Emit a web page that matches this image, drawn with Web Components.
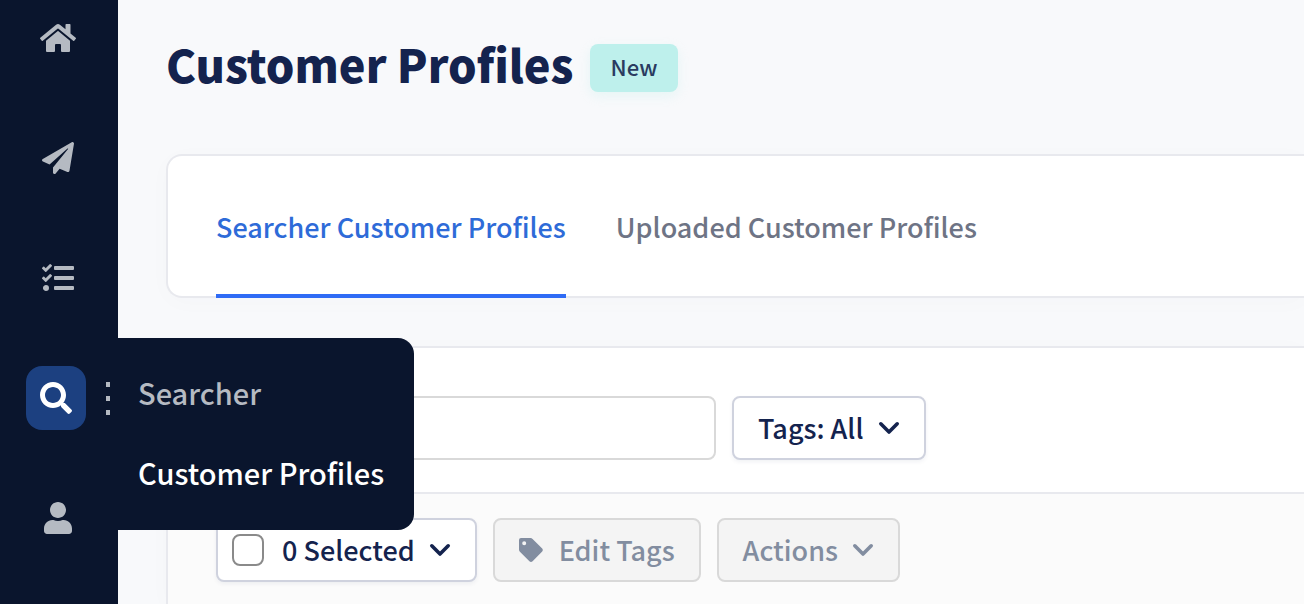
<!DOCTYPE html>
<html lang="en">
<head>
<meta charset="utf-8">
<meta name="viewport" content="width=device-width, initial-scale=1">
<title>Customer Profiles</title>
<style>
  body {
    margin: 0;
    min-height: 100vh;
    display: flex;
    background: #f8f9fb;
    color: #14234e;
    font-family: "Noto Sans CJK SC", "Noto Sans", sans-serif;
    font-size: 27px;
    line-height: 40px;
    font-weight: 500;
    overflow: hidden;
  }

  main {
    flex: 1;
    min-width: 0;
    display: flex;
    flex-direction: column;
    gap: 48px;
    padding: 30px 0 0 48px;
  }
</style>
</head>
<body>
  <side-bar>
    <nav-item icon="home" label="Home"></nav-item>
    <nav-item icon="plane" label="Campaigns"></nav-item>
    <nav-item icon="tasks" label="Tasks"></nav-item>
    <nav-item icon="search" label="Search" active>
      <fly-out>
        <fly-link>Searcher</fly-link>
        <fly-link current>Customer Profiles</fly-link>
      </fly-out>
    </nav-item>
    <nav-item icon="user" label="Account"></nav-item>
  </side-bar>

  <main>
    <page-header>Customer Profiles<status-badge slot="badge">New</status-badge></page-header>
    <tab-card>
      <tab-item active>Searcher Customer Profiles</tab-item>
      <tab-item>Uploaded Customer Profiles</tab-item>
    </tab-card>
    <profile-panel>
      <search-field slot="filters" label="Search profiles"></search-field>
      <filter-select slot="filters" label="Tags">Tags: All</filter-select>
      <select-menu slot="actions">0 Selected</select-menu>
      <tool-button slot="actions" icon="tag" disabled>Edit Tags</tool-button>
      <tool-button slot="actions" caret disabled>Actions</tool-button>
    </profile-panel>
  </main>

<script>
const ICONS = {
  home: `<svg width="36" height="32" viewBox="0 0 576 512" fill="currentColor"><path d="M280.4 148.3L96 300.1V464a16 16 0 0 0 16 16l112.100-.3a16 16 0 0 0 15.900-16V368a16 16 0 0 1 16-16h64a16 16 0 0 1 16 16v95.600a16 16 0 0 0 16 16.100L464 480a16 16 0 0 0 16-16V300L295.700 148.300a12.200 12.200 0 0 0-15.300 0zM571.600 251.500L488 182.600V44a12 12 0 0 0-12-12h-56a12 12 0 0 0-12 12v72.600L318.500 43a48 48 0 0 0-61 0L4.300 251.500a12 12 0 0 0-1.600 16.900l25.500 31a12 12 0 0 0 16.900 1.600l235.200-193.700a12.200 12.200 0 0 1 15.300 0L530.900 301a12 12 0 0 0 16.900-1.600l25.500-31a12 12 0 0 0-1.700-16.900z"/></svg>`,
  plane: `<svg width="32" height="32" viewBox="0 0 512 512" fill="currentColor"><path d="M476 3.200L12.500 270.600c-18.100 10.400-15.800 35.600 2.200 43.200L121 358.400l287.300-253.200c5.500-4.900 13.300 2.600 8.600 8.300L176 407v80.500c0 23.600 28.500 32.900 42.500 15.800L282 426l124.600 52.200c14.200 6 30.400-2.900 33-18.200l72-432C515 7.800 493.300-6.800 476 3.200z"/></svg>`,
  tasks: `<svg width="32" height="32" viewBox="0 0 512 512" fill="currentColor"><path d="M139.610 35.500a12 12 0 0 0-17 0L58.930 98.810l-22.700-22.120a12 12 0 0 0-17 0L3.530 92.410a12 12 0 0 0 0 17l47.590 47.400a12.780 12.780 0 0 0 17.610 0l15.590-15.620L156.520 69a12.090 12.090 0 0 0 .09-17zm0 159.190a12 12 0 0 0-17 0l-63.680 63.720-22.700-22.100a12 12 0 0 0-17 0L3.530 252a12 12 0 0 0 0 17L51 316.500a12.770 12.770 0 0 0 17.600 0l15.700-15.690 72.200-72.220a12 12 0 0 0 .09-16.900zM64 368c-26.490 0-48.590 21.500-48.590 48S37.530 464 64 464a48 48 0 0 0 0-96zm432 16H208a16 16 0 0 0-16 16v32a16 16 0 0 0 16 16h288a16 16 0 0 0 16-16v-32a16 16 0 0 0-16-16zm0-320H208a16 16 0 0 0-16 16v32a16 16 0 0 0 16 16h288a16 16 0 0 0 16-16V80a16 16 0 0 0-16-16zm0 160H208a16 16 0 0 0-16 16v32a16 16 0 0 0 16 16h288a16 16 0 0 0 16-16v-32a16 16 0 0 0-16-16z"/></svg>`,
  search: `<svg width="32" height="32" viewBox="0 0 512 512" fill="currentColor"><path d="M505 442.700L405.300 343c-4.500-4.500-10.600-7-17-7H372c27.600-35.300 44-79.700 44-128C416 93.100 322.900 0 208 0S0 93.100 0 208s93.100 208 208 208c48.300 0 92.700-16.400 128-44v16.300c0 6.400 2.500 12.500 7 17l99.700 99.700c9.400 9.400 24.600 9.400 33.900 0l28.300-28.300c9.400-9.400 9.400-24.600.1-34zM208 336c-70.700 0-128-57.200-128-128 0-70.700 57.200-128 128-128 70.700 0 128 57.200 128 128 0 70.700-57.200 128-128 128z"/></svg>`,
  user: `<svg width="28" height="32" viewBox="0 0 448 512" fill="currentColor"><path d="M224 256c70.700 0 128-57.300 128-128S294.700 0 224 0 96 57.300 96 128s57.300 128 128 128zm89.600 32h-16.700c-22.200 10.200-46.900 16-72.900 16s-50.600-5.800-72.900-16h-16.700C60.200 288 0 348.200 0 422.400V464c0 26.500 21.500 48 48 48h352c26.500 0 48-21.500 48-48v-41.600c0-74.200-60.200-134.400-134.400-134.400z"/></svg>`,
  tag: `<svg width="24" height="24" viewBox="0 0 24 24" fill="currentColor"><path fill-rule="evenodd" d="M2 0H11.500Q12.700 0 13.600.900L23.200 10.400Q24.400 12 23.200 13.600L13.600 23.200Q12 24.600 10.400 23.200L.9 13.800Q0 12.900 0 11.600V2Q0 0 2 0zM5.200 3.200a2 2 0 1 0 0 4 2 2 0 0 0 0-4z"/></svg>`,
  caret: `<svg width="22" height="14" viewBox="0 0 22 14" fill="none" stroke="currentColor" stroke-width="3.600" stroke-linecap="round" stroke-linejoin="round"><path d="M2.800 2.800l8.200 8.200 8.200-8.200"/></svg>`
};

class SideBar extends HTMLElement {
  constructor() {
    super();
    this.attachShadow({ mode: "open" });
  }

  connectedCallback() {
    this.shadowRoot.innerHTML = `
      <style>
        :host {
          display: block;
          flex: none;
          width: 118px;
          box-sizing: border-box;
          background: #0a152d;
          color: #b5bac2;
          z-index: 2;
        }

        nav {
          display: flex;
          flex-direction: column;
          gap: 56px;
          padding: 6px 0 6px 26px;
        }
      </style>
      <nav aria-label="Main"><slot></slot></nav>
    `;
  }
}

class NavItem extends HTMLElement {
  constructor() {
    super();
    this.attachShadow({ mode: "open" });
  }

  connectedCallback() {
    const active = this.hasAttribute("active");

    this.shadowRoot.innerHTML = `
      <style>
        :host {
          display: flex;
          align-items: center;
          gap: 20px;
          height: 64px;
          position: relative;
        }

        a {
          display: grid;
          place-items: center;
          width: 64px;
          height: 64px;
          border-radius: 16px;
          color: inherit;
        }

        :host([active]) a {
          width: 60px;
          background: #1c4080;
          color: #fff;
        }

        svg { display: block; }

        .dots {
          display: grid;
          gap: 9px;
        }

        .dots i {
          width: 4px;
          height: 5px;
          background: currentColor;
        }
      </style>
      <a href="#" aria-label="${this.getAttribute("label")}">${ICONS[this.getAttribute("icon")]}</a>
      ${active ? `<span class="dots"><i></i><i></i><i></i></span>` : ""}
      <slot></slot>
    `;
  }
}

class FlyOut extends HTMLElement {
  constructor() {
    super();
    this.attachShadow({ mode: "open" });
  }

  connectedCallback() {
    this.shadowRoot.innerHTML = `
      <style>
        /* opens beside the rail, over the page */
        :host {
          position: absolute;
          left: 100%;
          top: -28px;
          padding: 14px 30px 18px 20px;
          border-radius: 0 16px 16px 0;
          background: #0a152d;
          font-size: 29px;
          white-space: nowrap;
        }
      </style>
      <slot></slot>
    `;
  }
}

class FlyLink extends HTMLElement {
  constructor() {
    super();
    this.attachShadow({ mode: "open" });
  }

  connectedCallback() {
    this.shadowRoot.innerHTML = `
      <style>
        :host { display: block; }

        a {
          display: block;
          padding: 20px 0;
          color: #b5bac2;
          text-decoration: none;
        }

        :host([current]) a { color: #fff; }
      </style>
      <a href="#"><slot></slot></a>
    `;
  }
}

class PageHeader extends HTMLElement {
  constructor() {
    super();
    this.attachShadow({ mode: "open" });
  }

  connectedCallback() {
    this.shadowRoot.innerHTML = `
      <style>
        :host {
          display: flex;
          align-items: center;
          gap: 16px;
          height: 76px;
        }

        h1 {
          margin: 0;
          padding-bottom: 8px;
          font-size: 45px;
          line-height: 68px;
          font-weight: 900;
        }
      </style>
      <h1><slot></slot></h1>
      <slot name="badge"></slot>
    `;
  }
}

class StatusBadge extends HTMLElement {
  constructor() {
    super();
    this.attachShadow({ mode: "open" });
  }

  connectedCallback() {
    this.shadowRoot.innerHTML = `
      <style>
        :host {
          display: block;
          padding: 0 21px 4px;
          border-radius: 8px;
          background: #bef0ec;
          color: #2a3b60;
          font-size: 22px;
          line-height: 44px;
          box-shadow: 0 4px 12px rgba(190, 240, 236, 0.3);
        }
      </style>
      <slot></slot>
    `;
  }
}

class TabCard extends HTMLElement {
  constructor() {
    super();
    this.attachShadow({ mode: "open" });
  }

  connectedCallback() {
    this.shadowRoot.innerHTML = `
      <style>
        :host {
          display: block;
          border: 2px solid #e8e9ee;
          border-right: 0;
          border-radius: 16px 0 0 16px;
          background: #fff;
          box-shadow: 0 4px 24px rgba(20, 35, 78, 0.02);
        }

        div {
          display: flex;
          gap: 50px;
          padding: 0 48px;
          margin-bottom: -2px;
        }
      </style>
      <div role="tablist"><slot></slot></div>
    `;
  }
}

class TabItem extends HTMLElement {
  constructor() {
    super();
    this.attachShadow({ mode: "open" });
  }

  connectedCallback() {
    this.shadowRoot.innerHTML = `
      <style>
        :host { display: block; }

        button {
          display: block;
          padding: 51px 0 47px;
          border: 0;
          border-bottom: 4px solid transparent;
          background: none;
          color: #6e7485;
          font: inherit;
          white-space: nowrap;
          cursor: pointer;
        }

        :host([active]) button {
          color: #2e6bd8;
          border-color: #2f6bf5;
        }
      </style>
      <button role="tab" aria-selected="${this.hasAttribute("active")}"><slot></slot></button>
    `;
  }
}

class ProfilePanel extends HTMLElement {
  constructor() {
    super();
    this.attachShadow({ mode: "open" });
  }

  connectedCallback() {
    this.shadowRoot.innerHTML = `
      <style>
        :host {
          display: flex;
          flex-direction: column;
          flex: 1;
          border: 2px solid #e8e9ee;
          border-width: 2px 0 0 2px;
          border-radius: 16px 0 0 0;
          background: #fff;
          box-shadow: 0 4px 24px rgba(20, 35, 78, 0.02);
        }

        .row {
          display: flex;
          gap: 16px;
        }

        .filters { padding: 48px 48px 32px; }

        .actions {
          flex: 1;
          align-items: flex-start;
          padding: 24px 48px 22px;
          border-top: 2px solid #e8e9ee;
          background: #fbfbfb;
        }
      </style>
      <div class="row filters"><slot name="filters"></slot></div>
      <div class="row actions"><slot name="actions"></slot></div>
    `;
  }
}

class SearchField extends HTMLElement {
  constructor() {
    super();
    this.attachShadow({ mode: "open" });
  }

  connectedCallback() {
    this.shadowRoot.innerHTML = `
      <style>
        :host {
          display: block;
          flex: 0 1 500px;
        }

        input {
          display: block;
          width: 100%;
          height: 64px;
          box-sizing: border-box;
          padding: 0 24px;
          border: 2px solid #d9d9d9;
          border-radius: 8px;
          background: #fff;
          color: inherit;
          font: inherit;
        }
      </style>
      <input type="text" aria-label="${this.getAttribute("label")}">
    `;
  }
}

class FilterSelect extends HTMLElement {
  constructor() {
    super();
    this.attachShadow({ mode: "open" });
  }

  connectedCallback() {
    this.shadowRoot.innerHTML = `
      <style>
        :host {
          display: grid;
          align-items: center;
          box-sizing: border-box;
          height: 64px;
          border: 2px solid #cfd2de;
          border-radius: 8px;
          background: #fff;
          box-shadow: 0 2px 4px rgba(20, 35, 78, 0.06);
        }

        /* the caret shares the select's grid cell */
        select, svg { grid-area: 1 / 1; }

        select {
          appearance: none;
          height: 60px;
          padding: 0 60px 0 24px;
          border: 0;
          border-radius: 8px;
          background: none;
          color: inherit;
          font: inherit;
        }

        svg {
          justify-self: end;
          margin-right: 24px;
          pointer-events: none;
        }
      </style>
      <select aria-label="${this.getAttribute("label")}">
        <option>${this.textContent}</option>
      </select>
      ${ICONS.caret}
    `;
  }
}

class SelectMenu extends HTMLElement {
  constructor() {
    super();
    this.attachShadow({ mode: "open" });
  }

  connectedCallback() {
    this.shadowRoot.innerHTML = `
      <style>
        :host {
          display: flex;
          align-items: center;
          gap: 18px;
          box-sizing: border-box;
          height: 64px;
          padding: 0 24px 0 14px;
          border: 2px solid #cfd2de;
          border-radius: 8px;
          background: #fff;
          box-shadow: 0 2px 4px rgba(20, 35, 78, 0.06);
        }

        input {
          appearance: none;
          width: 32px;
          height: 32px;
          margin: 0;
          border: 2px solid #8a8a8a;
          border-radius: 8px;
          background: #fff;
        }

        button {
          display: flex;
          align-items: center;
          gap: 14px;
          padding: 0;
          border: 0;
          background: none;
          color: inherit;
          font: inherit;
          white-space: nowrap;
        }
      </style>
      <input type="checkbox" aria-label="Select all">
      <button aria-haspopup="menu"><slot></slot>${ICONS.caret}</button>
    `;
  }
}

class ToolButton extends HTMLElement {
  constructor() {
    super();
    this.attachShadow({ mode: "open" });
  }

  connectedCallback() {
    const icon = ICONS[this.getAttribute("icon")] || "";
    const caret = this.hasAttribute("caret") ? ICONS.caret : "";

    this.shadowRoot.innerHTML = `
      <style>
        :host { display: block; }

        button {
          display: flex;
          align-items: center;
          gap: 16px;
          height: 64px;
          box-sizing: border-box;
          padding: 0 24px;
          border: 2px solid #d9d9d9;
          border-radius: 8px;
          background: #f4f4f4;
          color: #828da0;
          font: inherit;
          white-space: nowrap;
        }

        :host([caret]) button { gap: 14px; }
      </style>
      <button ${this.hasAttribute("disabled") ? "disabled" : ""}>${icon}<slot></slot>${caret}</button>
    `;
  }
}

customElements.define("side-bar", SideBar);
customElements.define("nav-item", NavItem);
customElements.define("fly-out", FlyOut);
customElements.define("fly-link", FlyLink);
customElements.define("page-header", PageHeader);
customElements.define("status-badge", StatusBadge);
customElements.define("tab-card", TabCard);
customElements.define("tab-item", TabItem);
customElements.define("profile-panel", ProfilePanel);
customElements.define("search-field", SearchField);
customElements.define("filter-select", FilterSelect);
customElements.define("select-menu", SelectMenu);
customElements.define("tool-button", ToolButton);
</script>
</body>
</html>
